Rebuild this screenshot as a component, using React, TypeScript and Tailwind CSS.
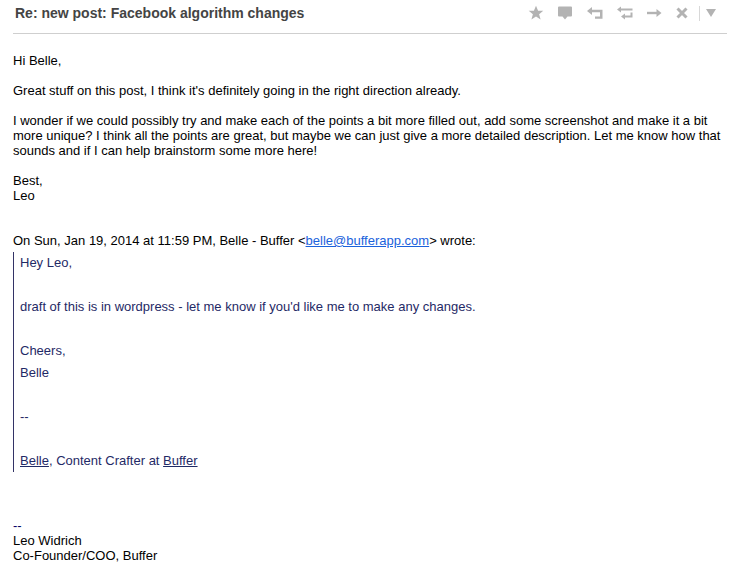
// Gmail message view: subject bar with toolbar icons, reply body, quoted text, signature.
function Toolbar() {
  return (
    <div className="flex items-center text-[#b3b3b3]">
      <svg width="16" height="16" viewBox="0 0 16 16" fill="currentColor">
        <path d="M8 .8l2.1 5h5.2l-4.2 3.4 1.5 5.3L8 11.5l-4.6 3 1.5-5.3L.7 5.8h5.2z" />
      </svg>
      <svg width="16" height="16" viewBox="0 0 16 16" className="ml-[13px]" fill="currentColor">
        <path d="M2 1.5h12a1 1 0 0 1 1 1v8a1 1 0 0 1-1 1h-3.5L8 14.5l-2.5-3H2a1 1 0 0 1-1-1v-8a1 1 0 0 1 1-1z" />
      </svg>
      <svg width="18" height="16" viewBox="0 0 18 16" className="ml-[13px]" fill="currentColor">
        <path d="M1 6l5-4v8z" />
        <path d="M5 4.8h11.5v9H9v-2.4h5V7.2H5z" />
      </svg>
      <svg width="18" height="16" viewBox="0 0 18 16" className="ml-[12px]" fill="currentColor">
        <path d="M1 4.5L5 1.5v6z" />
        <path d="M4 3.5h12.5v2H4z" />
        <path d="M5 11.5l4-3v6z" />
        <path d="M8 10.5h6.5V7.5h2v5H8z" />
      </svg>
      <svg width="17" height="16" viewBox="0 0 17 16" className="ml-[12px]" fill="currentColor">
        <path d="M1 6.8h10v2.4H1z" />
        <path d="M10.5 4l5 4-5 4z" />
      </svg>
      <svg width="12" height="12" viewBox="0 0 12 12" className="ml-[13px]" fill="none" stroke="currentColor" strokeWidth="3">
        <path d="M1.5 1.5l9 9M10.5 1.5l-9 9" />
      </svg>
      <div className="ml-[11px] h-[15px] w-px bg-[#d8d8d8]" />
      <svg width="10" height="8" viewBox="0 0 10 8" className="ml-[6px]" fill="currentColor">
        <path d="M0 0h10L5 8z" />
      </svg>
    </div>
  );
}

export default function App() {
  return (
    <div className="h-[576px] w-[730px] overflow-hidden bg-white font-['Liberation_Sans',Arial,sans-serif] text-[13px] leading-[15px] text-black">
      <div className="mx-[13px] flex h-[34px] w-[714px] items-center justify-between border-b border-[#cfcfcf] pl-[2px] pr-[11px] pb-[7px]">
        <h1 className="text-[14px] font-bold text-[#444444]">Re: new post: Facebook algorithm changes</h1>
        <Toolbar />
      </div>

      <div className="px-[13px] pt-[19px]">
        <p>Hi Belle,</p>
        <p className="mt-[15px]">Great stuff on this post, I think it's definitely going in the right direction already.</p>
        <p className="mt-[15px] whitespace-nowrap">
          I wonder if we could possibly try and make each of the points a bit more filled out, add some screenshot and make it a bit
          <br />
          more unique? I think all the points are great, but maybe we can just give a more detailed description. Let me know how that
          <br />
          sounds and if I can help brainstorm some more here!
        </p>
        <p className="mt-[15px]">
          Best,
          <br />
          Leo
        </p>
        <p className="mt-[30px]">
          On Sun, Jan 19, 2014 at 11:59 PM, Belle - Buffer &lt;
          <a className="text-[#1a62dc] underline">belle@bufferapp.com</a>
          &gt; wrote:
        </p>
        <blockquote className="mt-[4px] w-fit border-l border-[#333366] pl-[6px] leading-[22px] text-[#1f2a66]">
          <p>Hey Leo,</p>
          <p className="mt-[22px]">draft of this is in wordpress - let me know if you'd like me to make any changes.</p>
          <p className="mt-[22px]">Cheers,</p>
          <p>Belle</p>
          <p className="mt-[22px]">--</p>
          <p className="mt-[22px]">
            <span className="underline">Belle</span>, Content Crafter at <span className="underline">Buffer</span>
          </p>
        </blockquote>
        <div className="mt-[46px]">
          <p className="text-[#000066]">--</p>
          <p>Leo Widrich</p>
          <p>Co-Founder/COO, Buffer</p>
        </div>
      </div>
    </div>
  );
}
